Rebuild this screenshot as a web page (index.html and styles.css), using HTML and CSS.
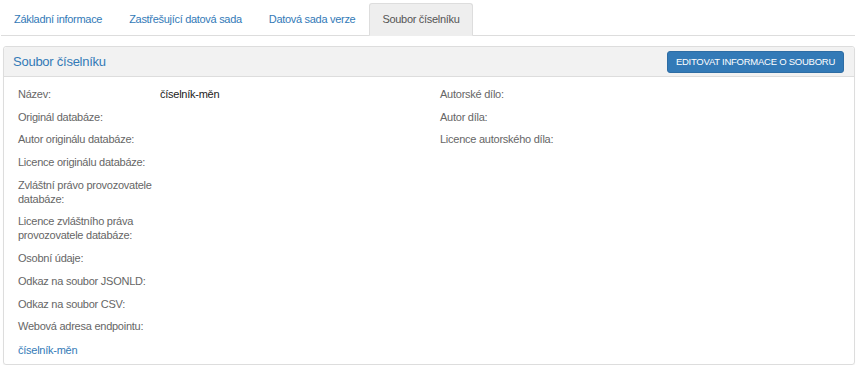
FILE: index.html
```html
<!DOCTYPE html>
<html lang="cs">
<head>
    <meta charset="UTF-8">
    <meta name="viewport" content="width=device-width, initial-scale=1.0">
    <title>Soubor číselníku</title>
    <link rel="stylesheet" href="styles.css">
</head>
<body>
    <ul class="nav-tabs">
        <li><a href="#">Základní informace</a></li>
        <li><a href="#">Zastřešující datová sada</a></li>
        <li><a href="#">Datová sada verze</a></li>
        <li class="active"><a href="#">Soubor číselníku</a></li>
    </ul>

    <div class="panel">
        <div class="panel-heading">
            <h3 class="panel-title">Soubor číselníku</h3>
            <button class="btn-primary">Editovat informace o souboru</button>
        </div>
        <div class="panel-body">
            <div class="columns">
                <div class="info-list">
                    <div class="info-item"><span class="label">Název:</span><span class="value">číselník-měn</span></div>
                    <div class="info-item"><span class="label">Originál databáze:</span><span class="value"></span></div>
                    <div class="info-item"><span class="label">Autor originálu databáze:</span><span class="value"></span></div>
                    <div class="info-item"><span class="label">Licence originálu databáze:</span><span class="value"></span></div>
                    <div class="info-item"><span class="label">Zvláštní právo provozovatele databáze:</span><span class="value"></span></div>
                    <div class="info-item"><span class="label">Licence zvláštního práva provozovatele databáze:</span><span class="value"></span></div>
                    <div class="info-item"><span class="label">Osobní údaje:</span><span class="value"></span></div>
                    <div class="info-item"><span class="label">Odkaz na soubor JSONLD:</span><span class="value"></span></div>
                    <div class="info-item"><span class="label">Odkaz na soubor CSV:</span><span class="value"></span></div>
                    <div class="info-item"><span class="label">Webová adresa endpointu:</span><span class="value"></span></div>
                </div>
                <div class="info-list">
                    <div class="info-item"><span class="label">Autorské dílo:</span><span class="value"></span></div>
                    <div class="info-item"><span class="label">Autor díla:</span><span class="value"></span></div>
                    <div class="info-item"><span class="label">Licence autorského díla:</span><span class="value"></span></div>
                </div>
            </div>
            <a class="file-link" href="#">číselník-měn</a>
        </div>
    </div>
</body>
</html>
```

FILE: styles.css
```css
body {
    font-family: "Liberation Sans", Arial, sans-serif;
    font-size: 11px;
    letter-spacing: -0.25px;
    color: #333;
    margin: 0;
    padding: 3px 3px 0 1px;
    background-color: white;
}

a {
    color: #337ab7;
    text-decoration: none;
}

.nav-tabs {
    display: flex;
    list-style: none;
    margin: 0 0 10px 0;
    padding: 0;
    border-bottom: 1px solid #ddd;
}

.nav-tabs li {
    margin-right: 1px;
    margin-bottom: -1px;
}

.nav-tabs a {
    display: block;
    padding: 8px 12px;
    line-height: 15px;
    letter-spacing: -0.3px;
    border: 1px solid transparent;
    border-radius: 3px 3px 0 0;
}

.nav-tabs .active a {
    color: #555;
    background-color: #eee;
    border-color: #ddd;
    border-bottom-color: transparent;
}

.panel {
    margin-left: 2px;
    border: 1px solid #ddd;
    border-radius: 3px;
    box-shadow: 0 1px 1px rgba(0, 0, 0, 0.05);
}

.panel-heading {
    display: flex;
    justify-content: space-between;
    align-items: center;
    height: 29px;
    padding: 0 10px 0 9px;
    background-color: #f2f2f2;
    border-bottom: 1px solid #ddd;
    border-radius: 3px 3px 0 0;
}

.panel-title {
    margin: 0;
    font-size: 13px;
    font-weight: normal;
    color: #337ab7;
}

.btn-primary {
    font-family: inherit;
    font-size: 9.5px;
    letter-spacing: -0.25px;
    text-transform: uppercase;
    color: white;
    background-color: #337ab7;
    border: 1px solid #2e6da4;
    border-radius: 3px;
    height: 22px;
    padding: 0 8px;
    cursor: pointer;
}

.panel-body {
    padding: 10px 14px 7px 14px;
}

.columns {
    display: grid;
    grid-template-columns: 422px 1fr;
}

.info-item {
    display: grid;
    grid-template-columns: 142px 1fr;
    line-height: 14px;
    margin-bottom: 8.7px;
}

.label {
    color: #666;
}

.value {
    color: #222;
}

.file-link {
    display: block;
    margin-top: 1px;
    line-height: 14px;
}
```
